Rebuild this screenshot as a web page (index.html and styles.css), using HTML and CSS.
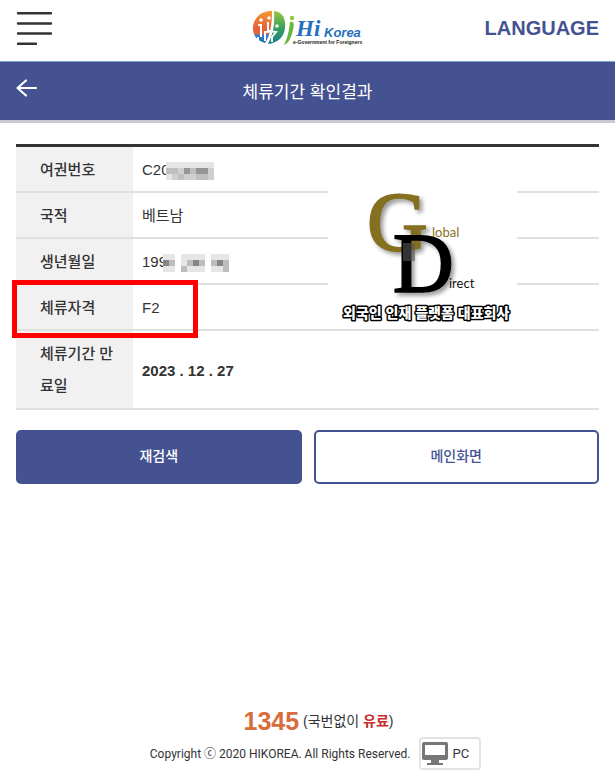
FILE: index.html
```html
<!DOCTYPE html>
<html lang="ko">
<head>
<meta charset="utf-8">
<meta name="viewport" content="width=device-width, initial-scale=1">
<title>체류기간 확인결과</title>
<link rel="stylesheet" href="styles.css">
</head>
<body>
<header class="top">
  <button class="icon-button" type="button" aria-label="메뉴">
    <svg width="38" height="36" viewBox="0 0 38 36" fill="none" stroke="#333" stroke-width="2.4" stroke-linecap="round"><path d="M2 3.300H35M2 13.500H35M2 23.500H35M2 33.700H20"/></svg>
  </button>
  <a class="brand" href="#" aria-label="Hi Korea">
    <svg width="116" height="40" viewBox="0 0 116 40">
      <defs>
        <linearGradient id="warm" x1="0" y1="0" x2="0" y2="1"><stop offset="0" stop-color="#f39a35"/><stop offset=".5" stop-color="#e8633a"/><stop offset=".7" stop-color="#e8633a"/><stop offset=".75" stop-color="#3d83c4"/><stop offset="1" stop-color="#1668b8"/></linearGradient>
        <linearGradient id="fresh" x1="0" y1="0" x2="0" y2="1"><stop offset="0" stop-color="#9ac93b"/><stop offset=".5" stop-color="#38a35c"/><stop offset="1" stop-color="#167d91"/></linearGradient>
      </defs>
      <path d="M22 3C10 2 2 12 3 22c1 7 5 11 12 13 5-7 7-18 7-32z" fill="url(#warm)"/>
      <path d="M24 3c9 1 12 8 11 17-1 9-7 15-17 16 5-10 7-19 6-33z" fill="url(#fresh)"/>
      <g fill="#fff"><circle cx="11" cy="12" r="1.800"/><circle cx="19" cy="10" r="1.800"/><circle cx="27" cy="18" r="1.800"/></g>
      <path d="M8 17h3v12M8 29v4M18 14v10h-3v9M19 23l7 1-4 5v5" fill="none" stroke="#fff" stroke-width="2"/>
      <circle cx="42" cy="10" r="2.200" fill="#94c83d"/>
      <path d="M40 14c5-1 4 4 3 8-2 8-4 13-9 15 4-8 5-15 6-23z" fill="#67b83e"/>
      <text class="logo-hi" x="46" y="28">Hi</text>
      <text class="logo-korea" x="74" y="29">Korea</text>
      <text class="logo-tag" x="43" y="36">e-Government for Foreigners</text>
    </svg>
  </a>
  <a class="language" href="#">LANGUAGE</a>
</header>

<div class="title-bar">
  <button class="icon-button back" type="button" aria-label="뒤로">
    <svg width="22" height="18" viewBox="0 0 22 18" fill="none" stroke="#fff" stroke-width="2.200" stroke-linecap="round" stroke-linejoin="round"><path d="M20 9H1.500M10 1.500L1.500 9l8.500 7.500"/></svg>
  </button>
  <h1>체류기간 확인결과</h1>
</div>

<main>
  <div class="result">
    <table>
      <tbody>
        <tr><th scope="row">여권번호</th><td>C20<svg class="mosaic" width="48" height="18" viewBox="0 0 8 3" shape-rendering="crispEdges"><path fill="#e5e5e5" d="M0 0h8v3H0z"/><path fill="#bfbfbf" d="M0 1h2v1H0zM4 1h1v1H4zM2 2h1v1H2zM5 2h2v1H5z"/><path fill="#cfcfcf" d="M2 1h1v1H2zM1 2h1v1H1zM7 1h1v2H7zM3 2h2v1H3z"/><path fill="#969696" d="M3 1h1v1H3zM5 1h2v1H5z"/></svg></td></tr>
        <tr><th scope="row">국적</th><td>베트남</td></tr>
        <tr><th scope="row">생년월일</th><td>199<svg class="mosaic" width="66" height="18" viewBox="0 0 11 3" shape-rendering="crispEdges"><path fill="#e6e6e6" d="M0 0h2v3H0zM3 0h4v3H3zM8 0h3v3H8z"/><path fill="#bdbdbd" d="M1 1h1v1H1zM4 1h1v1H4zM3 2h1v1H3zM6 1h1v1H6zM8 1h1v1H8zM10 1h1v2H10z"/><path fill="#858585" d="M0 1h1v1H0zM5 1h1v1H5zM9 1h1v1H9z"/></svg></td></tr>
        <tr><th scope="row">체류자격</th><td>F2</td></tr>
        <tr class="expiry"><th scope="row">체류기간 만료일</th><td>2023 . 12 . 27</td></tr>
      </tbody>
    </table>
    <div class="highlight"></div>
    <div class="watermark">
      <svg width="189" height="139" viewBox="0 0 189 139">
        <g class="mark-shadow">
          <text class="mark-g" x="39" y="61">G</text>
          <text class="mark-d" x="65" y="102">D</text>
        </g>
        <path d="M75 53h12v18H75z" fill="#555" opacity=".6"/>
        <text class="mark-word gold" x="104" y="47">lobal</text>
        <text class="mark-word" x="121" y="98">irect</text>
        <text class="mark-caption" x="15" y="128">외국인 인재 플랫폼 대표회사</text>
      </svg>
    </div>
  </div>
  <div class="actions">
    <button class="button primary" type="button">재검색</button>
    <button class="button" type="button">메인화면</button>
  </div>
</main>

<footer>
  <p class="call"><strong>1345</strong> <span>(국번없이 <b>유료</b>)</span></p>
  <div class="legal">
    <span>Copyright ⓒ 2020 HIKOREA. All Rights Reserved.</span>
    <a class="pc" href="#">
      <svg width="26" height="24" viewBox="0 0 26 24"><path fill="#777" fill-rule="evenodd" d="M2 0h22q2 0 2 2v14q0 2-2 2h-7v3h4v2H5v-2h4v-3H2q-2 0-2-2V2q0-2 2-2zm1 3v10h20V3z"/></svg>
      PC
    </a>
  </div>
</footer>
</body>
</html>
```
FILE: styles.css
```css
* { box-sizing: border-box; }

body {
  margin: 0;
  min-height: 100vh;
  display: flex;
  flex-direction: column;
  background: #fff;
  color: #333;
  font: 15px/32px "Liberation Sans", "Noto Sans CJK KR", sans-serif;
}

a { color: inherit; text-decoration: none; }
svg { display: block; }

.icon-button {
  padding: 0;
  border: 0;
  background: none;
  justify-self: start;
}

.top {
  display: grid;
  grid-template-columns: 1fr auto 1fr;
  align-items: center;
  height: 61px;
  padding: 0 16px 6px 16px;
}

.language {
  justify-self: end;
  color: #445292;
  font-size: 20px;
  font-weight: bold;
}

.logo-hi, .logo-korea { font-family: "Liberation Sans", sans-serif; font-style: italic; font-weight: bold; fill: #2470bd; }
.logo-hi { font-family: "Liberation Serif", serif; font-size: 23px; }
.logo-korea { font-size: 13px; }
.logo-tag { font-family: "Liberation Sans", sans-serif; font-size: 5px; font-weight: bold; fill: #222; }

.title-bar {
  display: grid;
  grid-template-columns: 1fr auto 1fr;
  align-items: center;
  height: 62px;
  padding: 0 16px;
  border-top: 1px solid #78a5d2;
  border-bottom: 3px solid #c9c8d5;
  background: #445292;
  color: #fff;
}

.back { margin-bottom: 6px; }

h1 {
  margin: 0;
  font-size: 17px;
  font-weight: 400;
  font-family: "Noto Sans CJK KR", sans-serif;
}

main { padding: 21px 16px; }

.result { position: relative; }

table {
  width: 100%;
  border-collapse: separate;
  border-spacing: 0;
  border-top: 3px solid #333;
}

th, td {
  height: 46px;
  padding: 7px 9px 5px;
  border-bottom: 2px solid #e0e0e0;
  text-align: left;
}

th {
  width: 117px;
  padding-left: 24px;
  padding-right: 16px;
  background: #f1f1f1;
  font-weight: 500;
}

td { font-weight: 400; }

.expiry th { padding-bottom: 6px; word-break: break-all; }
.expiry td { font-weight: bold; }

.mosaic {
  display: inline-block;
  margin-left: -4px;
  vertical-align: middle;
}

.highlight {
  position: absolute;
  top: 136px;
  left: -4px;
  width: 186px;
  height: 58px;
  border: 5px solid #f00;
}

.watermark {
  position: absolute;
  top: 46px;
  left: 312px;
  background: #fff;
}

.watermark svg { overflow: visible; }
.mark-shadow { filter: drop-shadow(3px 3px 2px #999); }
.mark-g, .mark-d { font-family: "Liberation Serif", serif; line-height: 1; }
.mark-g { font-size: 84px; fill: #85701f; stroke: #85701f; stroke-width: 2px; }
.mark-d { font-size: 84px; fill: #000; stroke: #000; stroke-width: 2px; }
.mark-word { font-family: Lato, sans-serif; font-size: 13px; fill: #111; }
.mark-word.gold { fill: #85701f; }
.mark-caption {
  font-family: "Noto Sans CJK KR", sans-serif;
  font-size: 14px;
  font-weight: 900;
  fill: #fff;
  stroke: #000;
  stroke-width: 3px;
  stroke-linejoin: round;
  paint-order: stroke;
}

.actions {
  display: grid;
  grid-template-columns: 1fr 1fr;
  gap: 12px;
  margin-top: 20px;
}

.button {
  height: 54px;
  padding: 0 0 4px;
  border: 2px solid #445292;
  border-radius: 5px;
  background: #fff;
  color: #445292;
  font: 500 14px "Noto Sans CJK KR", sans-serif;
}

.primary { background: #445292; color: #fff; }

footer {
  margin-top: auto;
  padding: 0 12px 4px 34px;
  text-align: center;
}

.call { margin: 0; font-size: 14px; }
.call strong { color: #d76c3c; font-size: 25px; vertical-align: middle; }
.call span { vertical-align: middle; }
.call b { color: #c92c2c; }

.legal {
  display: flex;
  justify-content: center;
  align-items: center;
  gap: 8px;
  padding-right: 6px;
  font-family: Roboto, "Noto Sans CJK KR", sans-serif;
  font-size: 12px;
}

.pc {
  display: flex;
  align-items: center;
  gap: 5px;
  height: 33px;
  padding: 0 10px 0 1px;
  border: 2px solid #e3e3e3;
  border-radius: 4px;
  font-size: 13px;
}
```
